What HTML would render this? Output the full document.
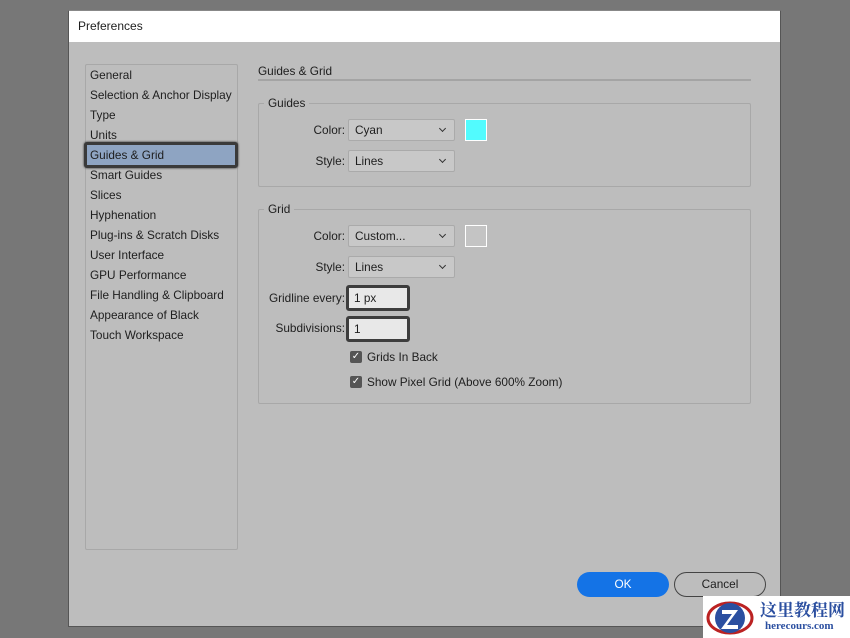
<!DOCTYPE html>
<html><head><meta charset="utf-8"><style>
*{margin:0;padding:0;box-sizing:border-box}
html,body{width:850px;height:638px}
body{background:#777;position:relative;overflow:hidden;font-family:"Liberation Sans",Arial,sans-serif;font-size:11.8px;color:#1e1e1e}
.a{position:absolute;white-space:nowrap}
#dlg{left:68px;top:10px;width:713px;height:617px;background:#bdbdbd;border:1px solid #555;border-top:1px solid #888}
#title{left:0;top:0;width:711px;height:31px;background:#fff}
.list{left:16px;top:53px;width:153px;height:486px;border:1px solid #a8a8a8;border-radius:2px}
.it{left:21px;height:20px;line-height:20px}
.sel{left:15px;top:131px;width:154px;height:26px;background:#8ea4c2;border:3px solid #3a3a3a;border-radius:3px;box-shadow:0 0 2px #222}
.grp{border:1px solid #a8a8a8;border-radius:2px}
.gl{background:#bdbdbd;padding:0 4px}
.dd{height:22px;background:#c8c8c8;border:1px solid #aaa;border-radius:2px;line-height:20px;padding-left:6px}
.dd:after{content:"";position:absolute;right:9px;top:6px;width:4px;height:4px;border-right:1.5px solid #333;border-bottom:1.5px solid #333;transform:rotate(45deg)}
.lbl{text-align:right}
.inp{height:26px;background:#e8e8e8;border:3px solid #3d3d3d;border-radius:3px;line-height:20px;padding-left:5px}
.cb{width:12px;height:12px;background:#555;border-radius:2px;color:#fff;font-size:10px;line-height:12px;text-align:center}
</style></head><body>
<div id="dlg" class="a">
<div id="title" class="a"><span class="a" style="left:9px;top:8px;font-size:12px">Preferences</span></div>
<div class="a list"></div>
<div class="a sel"></div>
<div class="a it" style="top:54px">General</div>
<div class="a it" style="top:74px">Selection &amp; Anchor Display</div>
<div class="a it" style="top:94px">Type</div>
<div class="a it" style="top:114px">Units</div>
<div class="a it" style="top:134px">Guides &amp; Grid</div>
<div class="a it" style="top:154px">Smart Guides</div>
<div class="a it" style="top:174px">Slices</div>
<div class="a it" style="top:194px">Hyphenation</div>
<div class="a it" style="top:214px">Plug-ins &amp; Scratch Disks</div>
<div class="a it" style="top:234px">User Interface</div>
<div class="a it" style="top:254px">GPU Performance</div>
<div class="a it" style="top:274px">File Handling &amp; Clipboard</div>
<div class="a it" style="top:294px">Appearance of Black</div>
<div class="a it" style="top:314px">Touch Workspace</div>

<div class="a" style="left:189px;top:53px">Guides &amp; Grid</div>
<div class="a" style="left:189px;top:68px;width:493px;height:2px;background:#a4a4a4"></div>

<div class="a grp" style="left:189px;top:92px;width:493px;height:84px"></div>
<div class="a gl" style="left:195px;top:85px">Guides</div>
<div class="a lbl" style="left:200px;top:112px;width:76px">Color:</div>
<div class="a dd" style="left:279px;top:108px;width:107px">Cyan</div>
<div class="a" style="left:396px;top:108px;width:22px;height:22px;background:#52fbfe;border:1px solid #fff"></div>
<div class="a lbl" style="left:200px;top:143px;width:76px">Style:</div>
<div class="a dd" style="left:279px;top:139px;width:107px">Lines</div>

<div class="a grp" style="left:189px;top:198px;width:493px;height:195px"></div>
<div class="a gl" style="left:195px;top:191px">Grid</div>
<div class="a lbl" style="left:200px;top:218px;width:76px">Color:</div>
<div class="a dd" style="left:279px;top:214px;width:107px">Custom...</div>
<div class="a" style="left:396px;top:214px;width:22px;height:22px;background:#c4c4c4;border:1px solid #fff"></div>
<div class="a lbl" style="left:200px;top:249px;width:76px">Style:</div>
<div class="a dd" style="left:279px;top:245px;width:107px">Lines</div>
<div class="a lbl" style="left:190px;top:280px;width:86px">Gridline every:</div>
<div class="a inp" style="left:277px;top:274px;width:64px">1 px</div>
<div class="a lbl" style="left:190px;top:310px;width:86px">Subdivisions:</div>
<div class="a inp" style="left:277px;top:305px;width:64px">1</div>
<div class="a cb" style="left:281px;top:340px">✓</div>
<div class="a" style="left:298px;top:339px">Grids In Back</div>
<div class="a cb" style="left:281px;top:365px">✓</div>
<div class="a" style="left:298px;top:364px">Show Pixel Grid (Above 600% Zoom)</div>

<div class="a" style="left:508px;top:561px;width:92px;height:25px;background:#1473e6;border-radius:13px;color:#fff;text-align:center;line-height:25px">OK</div>
<div class="a" style="left:605px;top:561px;width:92px;height:25px;border:1.5px solid #444;border-radius:13px;text-align:center;line-height:22px">Cancel</div>
</div>

<div class="a" style="left:703px;top:596px;width:147px;height:42px;background:#fff">
<svg class="a" style="left:2px;top:3px" width="52" height="38" viewBox="0 0 52 38">
<ellipse cx="25" cy="19" rx="22" ry="15" fill="none" stroke="#b22" stroke-width="3"/>
<circle cx="25" cy="19" r="15" fill="#2b4fa0"/>
<path d="M17 11h16l-11 15h11v4H16l11-15H17z" fill="#fff"/>
</svg>
<div class="a" style="left:57px;top:2px;font-family:'Noto Serif CJK SC',serif;font-weight:bold;font-size:17px;color:#2b4fa0;line-height:22px">这里教程网</div>
<div class="a" style="left:62px;top:24px;font-family:'Liberation Serif',serif;font-weight:bold;font-size:11px;color:#2b4fa0">herecours.com</div>
</div>
</body></html>
